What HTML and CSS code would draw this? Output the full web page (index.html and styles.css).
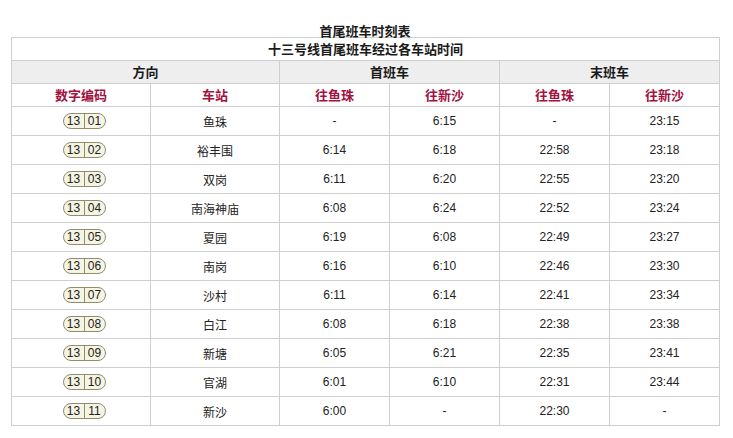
FILE: index.html
```html
<!DOCTYPE html>
<html lang="zh">
<head>
<meta charset="utf-8">
<link rel="stylesheet" href="styles.css">
</head>
<body>
<div class="page">
  <div class="title">首尾班车时刻表</div>
  <table class="tt">
    <colgroup>
      <col class="c1"><col class="c2"><col class="c3"><col class="c3"><col class="c3"><col class="c3">
    </colgroup>
    <tr class="sub"><td colspan="6">十三号线首尾班车经过各车站时间</td></tr>
    <tr class="grp"><td colspan="2">方向</td><td colspan="2">首班车</td><td colspan="2">末班车</td></tr>
    <tr class="hd"><td>数字编码</td><td>车站</td><td>往鱼珠</td><td>往新沙</td><td>往鱼珠</td><td>往新沙</td></tr>
    <tr><td class="code"><span class="bd"><span>13</span><span>01</span></span></td><td>鱼珠</td><td>-</td><td>6:15</td><td>-</td><td>23:15</td></tr>
    <tr><td class="code"><span class="bd"><span>13</span><span>02</span></span></td><td>裕丰围</td><td>6:14</td><td>6:18</td><td>22:58</td><td>23:18</td></tr>
    <tr><td class="code"><span class="bd"><span>13</span><span>03</span></span></td><td>双岗</td><td>6:11</td><td>6:20</td><td>22:55</td><td>23:20</td></tr>
    <tr><td class="code"><span class="bd"><span>13</span><span>04</span></span></td><td>南海神庙</td><td>6:08</td><td>6:24</td><td>22:52</td><td>23:24</td></tr>
    <tr><td class="code"><span class="bd"><span>13</span><span>05</span></span></td><td>夏园</td><td>6:19</td><td>6:08</td><td>22:49</td><td>23:27</td></tr>
    <tr><td class="code"><span class="bd"><span>13</span><span>06</span></span></td><td>南岗</td><td>6:16</td><td>6:10</td><td>22:46</td><td>23:30</td></tr>
    <tr><td class="code"><span class="bd"><span>13</span><span>07</span></span></td><td>沙村</td><td>6:11</td><td>6:14</td><td>22:41</td><td>23:34</td></tr>
    <tr><td class="code"><span class="bd"><span>13</span><span>08</span></span></td><td>白江</td><td>6:08</td><td>6:18</td><td>22:38</td><td>23:38</td></tr>
    <tr><td class="code"><span class="bd"><span>13</span><span>09</span></span></td><td>新塘</td><td>6:05</td><td>6:21</td><td>22:35</td><td>23:41</td></tr>
    <tr><td class="code"><span class="bd"><span>13</span><span>10</span></span></td><td>官湖</td><td>6:01</td><td>6:10</td><td>22:31</td><td>23:44</td></tr>
    <tr><td class="code"><span class="bd"><span>13</span><span>11</span></span></td><td>新沙</td><td>6:00</td><td>-</td><td>22:30</td><td>-</td></tr>
  </table>
</div>
</body>
</html>
```

FILE: styles.css
```css
html, body {
  margin: 0;
  padding: 0;
  background: #ffffff;
}
body {
  font-family: "Liberation Sans", "Noto Sans CJK SC", sans-serif;
  color: #222;
}
.page {
  width: 733px;
  height: 438px;
  padding-left: 11px;
  padding-top: 24px;
  box-sizing: border-box;
}
.title {
  width: 708px;
  text-align: center;
  font-family: "Noto Sans CJK SC", sans-serif;
  font-weight: bold;
  font-size: 13px;
  line-height: 13px;
  color: #1a1a1a;
}
.tt {
  border-collapse: collapse;
  table-layout: fixed;
  width: 709px;
  font-size: 12px;
}
.c1 { width: 139px; }
.c2 { width: 129px; }
.c3 { width: 110px; }
.tt td {
  border: 1px solid #cfcfcf;
  text-align: center;
  padding: 0;
  height: 28px;
  color: #222;
  font-family: "Liberation Sans", "Noto Sans CJK SC", sans-serif;
}
.tt td.code {
  padding-left: 6px;
}
.tt tr.sub td,
.tt tr.grp td,
.tt tr.hd td {
  height: 22px;
  font-weight: bold;
  font-family: "Noto Sans CJK SC", sans-serif;
  font-size: 13px;
  line-height: 16px;
  color: #1a1a1a;
}
.tt tr.grp td {
  background: #eeeeee;
}
.tt tr.hd td {
  color: #a3123e;
}
.bd {
  display: inline-flex;
  height: 14px;
  border: 1px solid #8e8d6e;
  border-radius: 8px;
  background: #f6f4e2;
  font-size: 12px;
  line-height: 14px;
  vertical-align: middle;
  color: #222;
  overflow: hidden;
}
.bd span {
  width: 20px;
  text-align: center;
}
.bd span + span {
  border-left: 1px solid #8e8d6e;
}
```
